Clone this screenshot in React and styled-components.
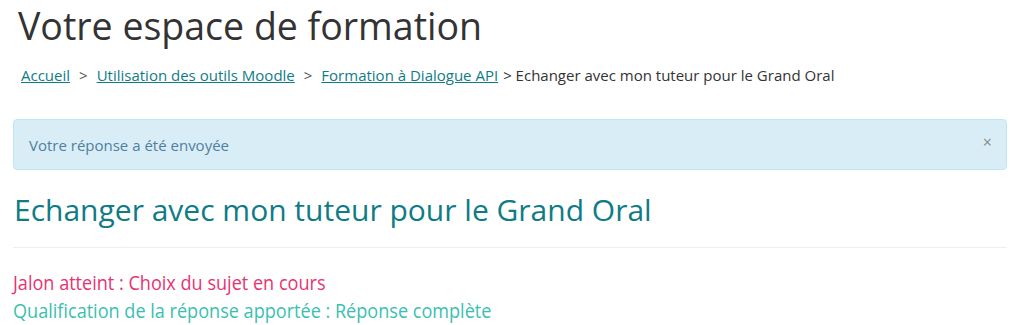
import React from "react";
import styled, { createGlobalStyle } from "styled-components";

const Global = createGlobalStyle`
  body {
    margin: 0;
    background: #fff;
    font-family: "Open Sans", "Liberation Sans", sans-serif;
    color: #333;
  }
`;

const Page = styled.div`
  padding: 0 5px 0 13px;
`;

const Title = styled.h1`
  margin: 0;
  padding: 3px 0 0 5px;
  font-size: 37.5px;
  font-weight: 400;
  line-height: 46px;
  color: #333;
`;

const Crumbs = styled.nav`
  display: flex;
  align-items: center;
  gap: 9px;
  padding: 16px 0 0 8px;
  font-size: 15px;
  line-height: 20px;
  color: #333;
`;

const Crumb = styled.a`
  color: #0f7c85;
  text-decoration: underline;
`;

const Sep = styled.span`
  color: #555;
`;

const Current = styled.span`
  margin-left: -4px;
`;

const Alert = styled.div`
  display: flex;
  align-items: center;
  justify-content: space-between;
  margin-top: 34px;
  height: 51px;
  box-sizing: border-box;
  padding: 0 14px 0 15px;
  background: #d9edf7;
  border: 1px solid #bce8f1;
  border-radius: 4px;
  color: #4f80a0;
  font-size: 15px;
`;

const Close = styled.span`
  color: #888;
  font-size: 16px;
  line-height: 1;
  margin-top: -6px;
`;

const Heading = styled.h2`
  margin: 20px 0 0 1px;
  font-size: 30px;
  font-weight: 400;
  line-height: 40px;
  color: #0f7c85;
`;

const Rule = styled.hr`
  margin: 17px 0 0;
  border: 0;
  border-top: 1px solid #eee;
`;

const Status = styled.div`
  margin-top: 21px;
  display: flex;
  flex-direction: column;
  align-items: flex-start;
`;

/* narrow face as in the screenshot */
const Line = styled.div`
  font-size: 20px;
  line-height: 28px;
  white-space: nowrap;
  transform: scaleX(0.904);
  transform-origin: left center;
  color: ${(p) => p.$color};
`;

export default function App() {
  return (
    <Page>
      <Global />
      <Title>Votre espace de formation</Title>
      <Crumbs>
        <Crumb href="#">Accueil</Crumb>
        <Sep>&gt;</Sep>
        <Crumb href="#">Utilisation des outils Moodle</Crumb>
        <Sep>&gt;</Sep>
        <Crumb href="#">Formation à Dialogue API</Crumb>
        <Current>&gt; Echanger avec mon tuteur pour le Grand Oral</Current>
      </Crumbs>
      <Alert>
        <span>Votre réponse a été envoyée</span>
        <Close>×</Close>
      </Alert>
      <Heading>Echanger avec mon tuteur pour le Grand Oral</Heading>
      <Rule />
      <Status>
        <Line $color="#e73370">Jalon atteint : Choix du sujet en cours</Line>
        <Line $color="#3bbfb0">Qualification de la réponse apportée : Réponse complète</Line>
      </Status>
    </Page>
  );
}
